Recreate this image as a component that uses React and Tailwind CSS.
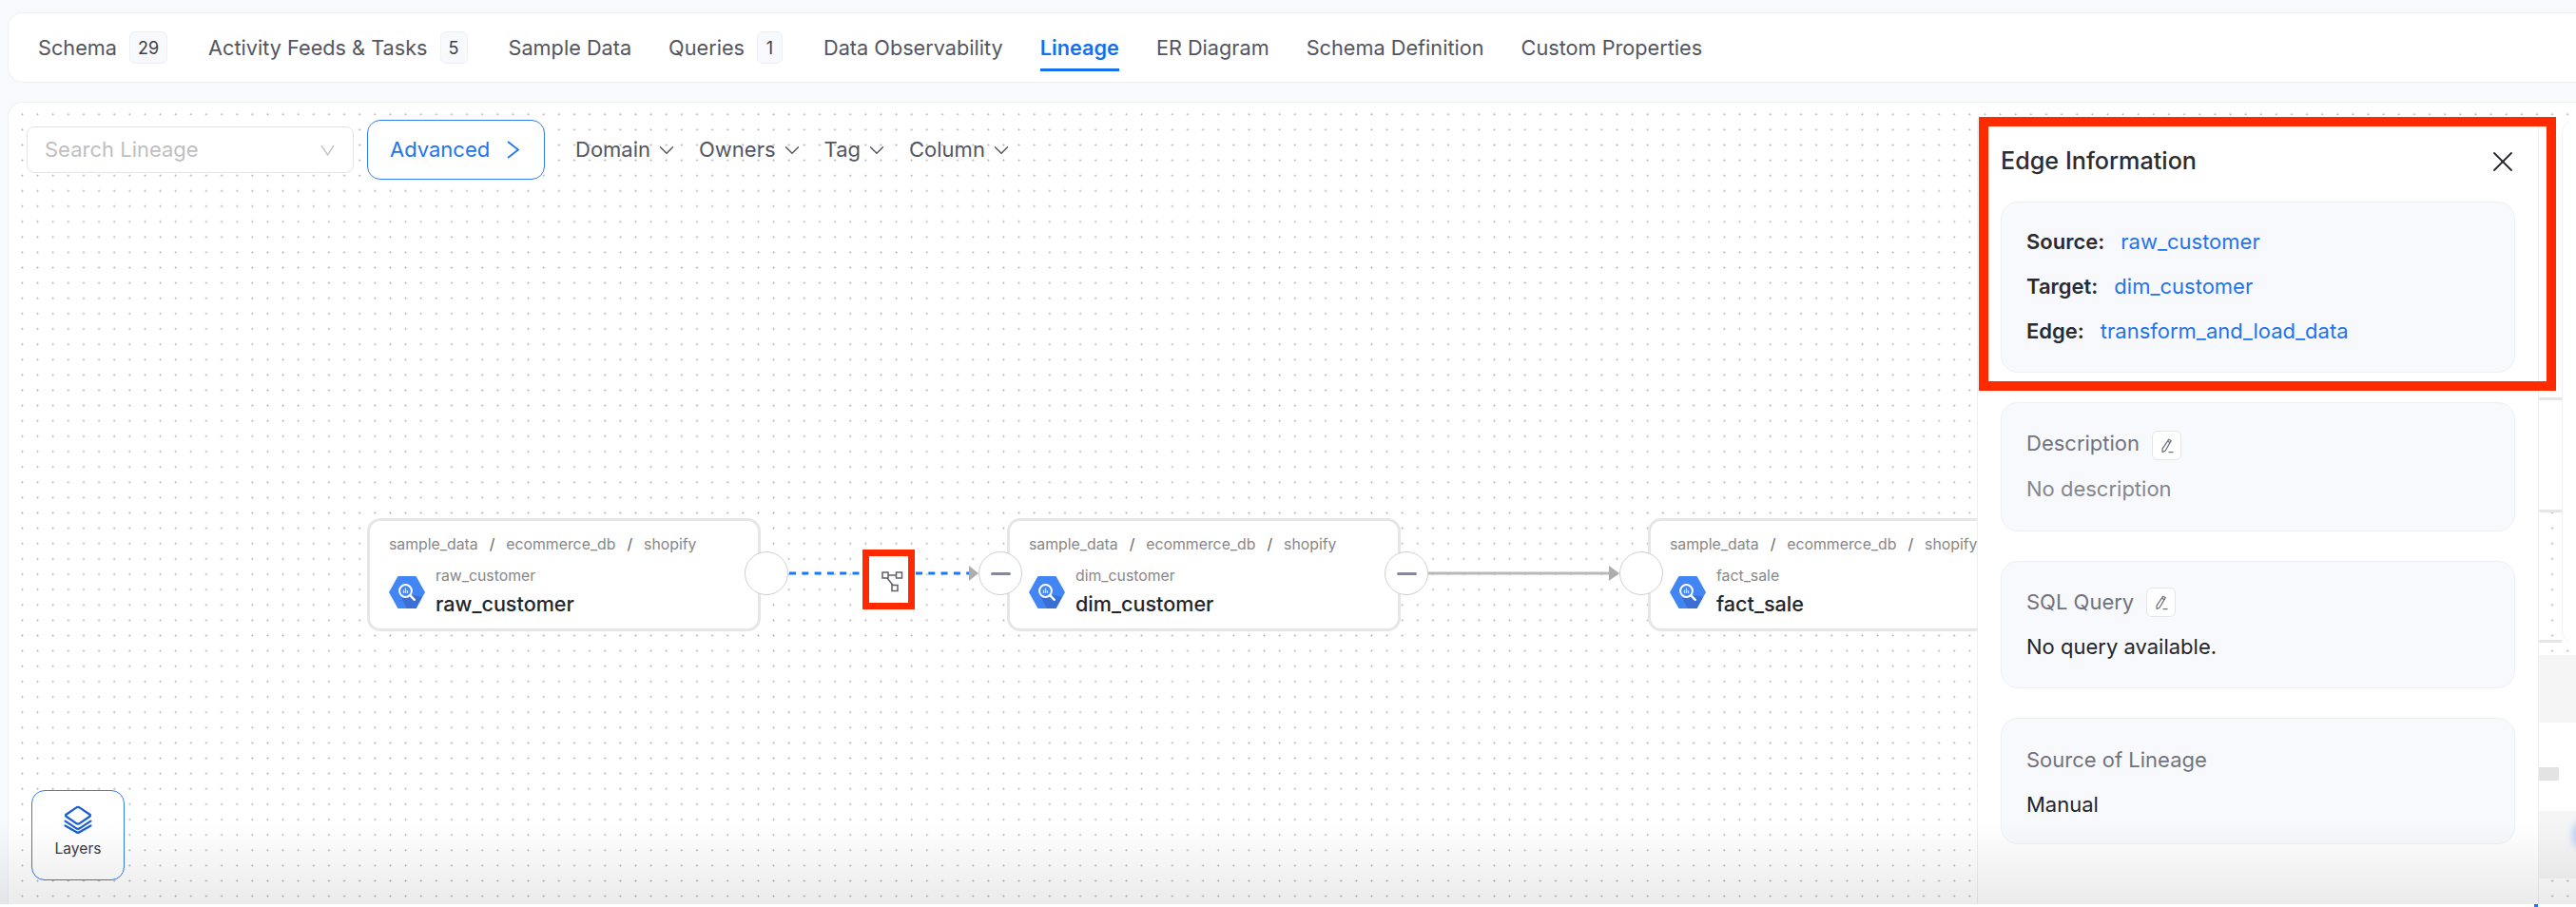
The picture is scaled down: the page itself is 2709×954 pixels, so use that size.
import React from 'react';
import { ChevronDown, X } from 'lucide-react';

const tabs = [
  { label: 'Schema', count: 29 },
  { label: 'Activity Feeds & Tasks', count: 5 },
  { label: 'Sample Data' },
  { label: 'Queries', count: 1 },
  { label: 'Data Observability' },
  { label: 'Lineage', active: true },
  { label: 'ER Diagram' },
  { label: 'Schema Definition' },
  { label: 'Custom Properties' },
];

function Tab({ label, count, active }) {
  return (
    <div className={count ? 'relative flex h-full items-center gap-[13px] mr-[4px]' : 'relative flex h-full items-center'}>
      <span className={active ? 'font-semibold text-[#1570ef]' : 'text-[#53565f]'}>{label}</span>
      {count && (
        <span className="flex h-[34px] min-w-[27px] items-center justify-center rounded-md border border-[#eef0f6] bg-[#f8f9fc] px-[8px] text-[18px] text-[#3d3f46]">
          {count}
        </span>
      )}
      {active && <span className="absolute bottom-[11px] left-0 right-0 h-[3px] bg-[#1570ef]" />}
    </div>
  );
}

function FilterButton({ label }) {
  return (
    <button className="flex items-center gap-[4px] text-[#53565f]">
      {label}
      <ChevronDown size={26} strokeWidth={1.3} />
    </button>
  );
}

// bigquery logo
function BigQueryIcon() {
  return (
    <svg viewBox="0 0 38 34" className="h-[34px] w-[38px] shrink-0">
      <polygon points="0,17 9.5,0 28.5,0 38,17 28.5,34 9.5,34" fill="#4285f4" />
      <polygon points="23,21 27,20 35,22 28.5,34 19,34 13,23" fill="#3a6fd6" />
      <circle cx="17.5" cy="15.5" r="6.4" fill="none" stroke="#fff" strokeWidth="2" />
      <path d="M22.2 20.2l4.6 4.6" stroke="#fff" strokeWidth="2.4" strokeLinecap="round" />
      <path d="M15.5 14.5v3.4M17.5 12.5v5.4M19.5 15v2.9" stroke="#cfe0fd" strokeWidth="1.3" />
    </svg>
  );
}

function Handle({ className, minus }) {
  return (
    <div className={`absolute top-[472px] flex h-[46px] w-[46px] items-center justify-center rounded-full border-[1.5px] border-[#cfcfcf] bg-white ${className}`}>
      {minus && <span className="h-[3px] w-[21px] rounded-sm bg-[#85889a]" />}
    </div>
  );
}

function Node({ name, className }) {
  return (
    <div className={`absolute top-[437px] h-[119px] w-[414px] rounded-[14px] border-[3px] border-[#e6e6e6] bg-white pl-[20px] pt-[13px] ${className}`}>
      <div className="flex h-[24px] items-center text-[15.8px] text-[#878787]">
        sample_data<span className="mx-[12px] text-[#5f5f5f]">/</span>ecommerce_db<span className="mx-[12px] text-[#5f5f5f]">/</span>shopify
      </div>
      <div className="mt-[10px] flex items-center gap-[11px]">
        <BigQueryIcon />
        <div>
          <div className="text-[15.8px] leading-[22px] text-[#878787]">{name}</div>
          <div className="mt-[3px] text-[21.6px] font-medium leading-[30px] text-[#23252b]">{name}</div>
        </div>
      </div>
    </div>
  );
}

function EditButton() {
  return (
    <button className="flex h-[31px] w-[31px] items-center justify-center rounded-md border border-[#e3e5ea] bg-white">
      <svg viewBox="0 0 18 18" className="h-[18px] w-[18px]" fill="none" stroke="#6b6e78" strokeWidth="1.2">
        <path d="M10.8 2.2l2.4 1.4-6.2 10.6-2.9 1.2-.1-3.2z" strokeLinejoin="round" />
        <path d="M9.6 4.2l2.4 1.4" />
        <path d="M10.5 15.6h5" />
      </svg>
    </button>
  );
}

function InfoCard({ className, children }) {
  return (
    <div className={`rounded-[18px] border border-[#eef0f6] bg-[#f8f9fc] px-[26px] ${className}`}>
      {children}
    </div>
  );
}

function LinkRow({ label, value }) {
  return (
    <div className="flex h-[47px] items-center gap-[17px]">
      <span className="font-semibold text-[#292b31]">{label}</span>
      <span className="text-[#1f74ec]">{value}</span>
    </div>
  );
}

export default function App() {
  return (
    <div className="relative h-[954px] w-[2709px] overflow-hidden bg-[#f8f9fc] pl-[8px] pt-[13px] font-['Inter',sans-serif] text-[22px]">
      {/* tabs */}
      <div className="flex h-[74px] items-center gap-[39px] rounded-l-[16px] border border-r-0 border-[#eef0f6] bg-white pl-[31px] text-[21.7px]">
        {tabs.map((t) => (
          <Tab key={t.label} {...t} />
        ))}
      </div>

      {/* lineage canvas */}
      <div className="relative mt-[20px] h-[847px] rounded-tl-[16px] border-l border-t border-[#eef0f6] bg-white bg-[radial-gradient(circle,#b4b4b4_0.8px,transparent_1.2px)] bg-[length:16.14px_16.14px] bg-[position:6.4px_4.2px]">
        <div className="flex items-center pl-[19px] pt-[18px]">
          <div className="flex h-[49px] w-[344px] items-center justify-between rounded-lg border border-[#e3e3e3] bg-white pl-[18px] pr-[19px] text-[#bfbfbf]">
            Search Lineage
            <svg viewBox="0 0 15 12" className="h-[12px] w-[15px]" fill="none" stroke="#c4c4c4" strokeWidth="1.4">
              <path d="M1 1l6.5 10L14 1" />
            </svg>
          </div>
          <button className="ml-[14px] flex h-[63px] w-[187px] items-center gap-[17px] rounded-[14px] border border-[#2f7df0] bg-white pl-[23px] text-[#1f74ec]">
            Advanced
            <svg viewBox="0 0 15 19" className="h-[19px] w-[15px]" fill="none" stroke="#1f74ec" strokeWidth="1.7">
              <path d="M2 1l11 8.5L2 18" />
            </svg>
          </button>
          <div className="ml-[32px] flex items-center gap-[21px]">
            <FilterButton label="Domain" />
            <FilterButton label="Owners" />
            <FilterButton label="Tag" />
            <FilterButton label="Column" />
          </div>
        </div>

        {/* edges */}
        <svg className="absolute left-[819px] top-[479px] h-[32px] w-[880px]" viewBox="0 0 880 32" fill="none">
          <path d="M2 16H192" stroke="#1677ff" strokeWidth="3" strokeDasharray="7 6.3" />
          <polygon points="191,8 201,16 191,24" fill="#adadad" />
          <path d="M674 16H868" stroke="#b9b9b9" strokeWidth="3" />
          <polygon points="864,8 875,16 864,24" fill="#adadad" />
        </svg>

        <Node name="raw_customer" className="left-[377px]" />
        <Node name="dim_customer" className="left-[1050px]" />
        <Node name="fact_sale" className="left-[1724px]" />
        <Handle className="left-[774px]" />
        <Handle className="left-[1020px]" minus />
        <Handle className="left-[1447px]" minus />
        <Handle className="left-[1694px]" />

        {/* edge label, with the red annotation around it */}
        <div className="absolute left-[898px] top-[470px] flex h-[63px] w-[55px] items-center justify-center border-[7px] border-[#ff2a00] bg-white">
          <svg viewBox="0 0 24 24" className="ml-[8px] mt-[4px] h-[24px] w-[24px] shrink-0" fill="none" stroke="#5f6169" strokeWidth="1.5">
            <rect x="1" y="2" width="6" height="6" />
            <rect x="15.5" y="2" width="6" height="6" />
            <rect x="11" y="15.5" width="6" height="6" />
            <path d="M7 5h8.5M6 8l6 7.5" />
          </svg>
        </div>

        {/* things behind the panel at the right edge */}
        <div className="absolute left-[2660px] top-[310px] h-[121px] w-[25px] border-y-[3px] border-[#e6e6e6] bg-white" />
        <div className="absolute left-[2660px] top-[565px] h-[3px] w-[25px] bg-[#e6e6e6]" />
        <div className="absolute left-[2660px] top-[581px] h-[235px] w-[40px] bg-white">
          <div className="h-[71px] bg-[#f5f5f5]" />
          <div className="mt-[47px] h-[14px] w-[22px] bg-[#e3e3e3]" />
          <div className="mt-[32px] h-[71px] bg-[#f5f5f5]" />
        </div>
        <div className="absolute left-[2685px] top-[17px] h-[553px] w-[23px] rounded-l-[16px] border-l border-[#eef0f6] bg-white" />
        <div className="absolute left-[2696px] top-[755px] h-[30px] w-[12px] rounded-l-full bg-[#bcd3fa] blur-[3px]" />

        {/* edge panel */}
        <div className="absolute bottom-0 left-[2070px] top-[17px] w-[591px] border-x border-[#eceef5] bg-white px-[24px]">
          <div className="flex h-[87px] items-center justify-between pr-[3px] pt-[2px]">
            <span className="text-[25.2px] font-medium text-[#2b2d33]">Edge Information</span>
            <X size={36} strokeWidth={1.2} className="-mr-[8px] text-[#23252b]" />
          </div>
          <div className="flex flex-col gap-[31px]">
            <InfoCard className="h-[180px] pt-[18px]">
              <LinkRow label="Source:" value="raw_customer" />
              <LinkRow label="Target:" value="dim_customer" />
              <LinkRow label="Edge:" value="transform_and_load_data" />
            </InfoCard>
            <InfoCard className="h-[136px] pt-[29px]">
              <div className="flex h-[31px] items-start gap-[13px] text-[#70737c]">
                <span className="leading-[27px]">Description</span>
                <EditButton />
              </div>
              <div className="mt-[14px] text-[#85878e]">No description</div>
            </InfoCard>
            <InfoCard className="h-[134px] pt-[26px]">
              <div className="flex items-center gap-[13px] text-[#70737c]">
                SQL Query
                <EditButton />
              </div>
              <div className="mt-[14px] text-[#23252b]">No query available.</div>
            </InfoCard>
            <InfoCard className="h-[133px] pt-[27px]">
              <div className="text-[#70737c]">Source of Lineage</div>
              <div className="mt-[14px] text-[#23252b]">Manual</div>
            </InfoCard>
          </div>
        </div>

        {/* red annotation around the edge information */}
        <div className="absolute left-[2072px] top-[15px] h-[288px] w-[607px] border-[10px] border-[#ff2a00]" />

        <button className="absolute left-[24px] top-[723px] flex h-[95px] w-[98px] flex-col items-center justify-center gap-[4px] rounded-[14px] border border-[#2f7df0] bg-white pb-[5px] text-[15.6px] text-[#3a3c44]">
          <svg viewBox="0 0 32 30" className="h-[30px] w-[32px]" fill="none" stroke="#1a5fd0" strokeWidth="2.3" strokeLinejoin="round" strokeLinecap="round">
            <path d="M14 2.6a3.4 3.4 0 0 1 4 0l10.4 7.1a1.3 1.3 0 0 1 0 2.1L18 18.9a3.4 3.4 0 0 1-4 0L3.6 11.8a1.3 1.3 0 0 1 0-2.1z" />
            <path d="M2.6 16.6l11.4 7.5a3.4 3.4 0 0 0 4 0l11.4-7.5" />
            <path d="M2.6 21.4l11.4 6.6a3.4 3.4 0 0 0 4 0l11.4-6.6" />
          </svg>
          Layers
        </button>
      </div>

      {/* fade at the bottom of the window */}
      <div className="pointer-events-none absolute bottom-[3px] left-0 right-0 h-[85px] bg-gradient-to-b from-transparent to-black/[0.08]" />
      <div className="absolute bottom-0 left-0 right-0 h-[3px] bg-white" />
      <div className="absolute bottom-0 left-[2665px] h-[3px] w-[4px] bg-[#1677ff]" />
    </div>
  );
}
